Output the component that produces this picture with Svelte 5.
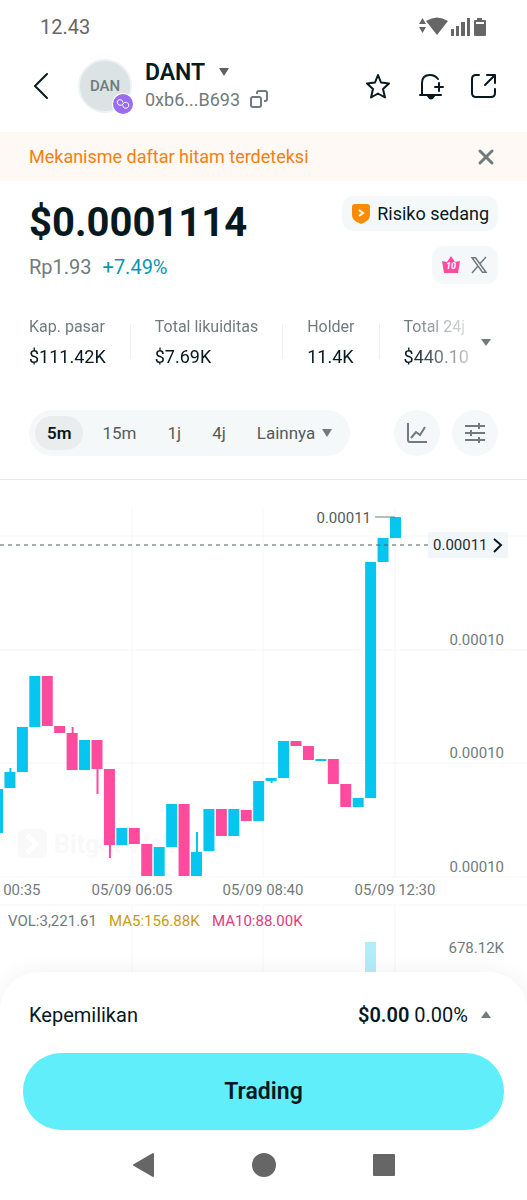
<script lang="ts">
	type Candle = { top: number; bottom: number; high?: number; low?: number; down?: boolean };

	const stats = [
		{ label: 'Kap. pasar', value: '$111.42K' },
		{ label: 'Total likuiditas', value: '$7.69K' },
		{ label: 'Holder', value: '11.4K' },
		{ label: 'Total 24j', value: '$440.10' }
	];

	const frames = ['5m', '15m', '1j', '4j'];
	let activeFrame = '5m';
	let showWarning = true;

	// y values in chart units, oldest first
	const candles: Candle[] = [
		{ top: 309, bottom: 353 },
		{ top: 292, bottom: 308, high: 288 },
		{ top: 247, bottom: 292 },
		{ top: 196, bottom: 247 },
		{ top: 196, bottom: 246, down: true },
		{ top: 246, bottom: 253, down: true },
		{ top: 253, bottom: 290, high: 247, down: true },
		{ top: 260, bottom: 290 },
		{ top: 260, bottom: 289, low: 314, down: true },
		{ top: 289, bottom: 365, low: 378, down: true },
		{ top: 348, bottom: 365 },
		{ top: 348, bottom: 364, down: true },
		{ top: 364, bottom: 396, down: true },
		{ top: 367, bottom: 396 },
		{ top: 324, bottom: 367 },
		{ top: 324, bottom: 396, down: true },
		{ top: 372, bottom: 396, high: 352 },
		{ top: 329, bottom: 371 },
		{ top: 329, bottom: 356, down: true },
		{ top: 329, bottom: 356 },
		{ top: 330, bottom: 341, down: true },
		{ top: 301, bottom: 341 },
		{ top: 298, bottom: 301, low: 303 },
		{ top: 261, bottom: 298 },
		{ top: 261, bottom: 266, down: true },
		{ top: 266, bottom: 280, down: true },
		{ top: 279, bottom: 281 },
		{ top: 279, bottom: 304, down: true },
		{ top: 304, bottom: 327, down: true },
		{ top: 318, bottom: 327 },
		{ top: 82, bottom: 318 },
		{ top: 58, bottom: 82 },
		{ top: 37, bottom: 58 }
	];

	const step = 398 / 32;
	const candleX = (i: number) => i * step - 8;

	const gridX = [132, 263, 395];
	const gridY = [56, 170, 283, 397, 425];
	const priceLabels = [165, 278, 392];
	const times = [
		{ x: 0, text: '05/09 00:35' },
		{ x: 132, text: '05/09 06:05' },
		{ x: 263, text: '05/09 08:40' },
		{ x: 395, text: '05/09 12:30' }
	];
</script>

<main>
	<div class="status">
		<span>12.43</span>
		<svg width="68" height="20" viewBox="0 0 68 20" fill="#666" aria-hidden="true">
			<path d="M3.5 1 7 7H0zM3.5 16 0 10H7z" />
			<path d="M7 4Q18-3 29 4L18 18z" />
			<path d="M32 12h3v7h-3zM37 9h3v10h-3zM42 5h4v14h-4zM48 1h3v18h-3z" />
			<path d="M58 1h5v2h3q1 0 1 1v14q0 1-1 1h-10q-1 0-1-1V4q0-1 1-1h2zM57 5v2h8V5z" fill-rule="evenodd" />
		</svg>
	</div>

	<header>
		<button class="icon" type="button" aria-label="Kembali">
			<svg width="24" height="28" viewBox="0 0 24 28" class="line">
				<path d="M18 2 6 14l12 12" />
			</svg>
		</button>
		<div class="avatar">
			DAN
			<svg class="chain" width="22" height="22" viewBox="0 0 22 22" aria-hidden="true">
				<circle cx="11" cy="11" r="11" fill="#fff" />
				<circle cx="11" cy="11" r="10" fill="#9b6cf0" />
				<path
					d="M11 9.500 10 7.300 7.800 6.500 5.700 7.600 5.200 10l1.600 2 2.400.3L11 11l1.300-1.400 2.300-.3 2 1.500.2 2.400-1.600 1.800-2.400.2-1.800-1.400v-1.500"
					fill="none"
					stroke="#fff"
					stroke-linejoin="round"
				/>
			</svg>
		</div>
		<div class="token">
			<button class="name" type="button">
				DANT
				<svg width="10" height="8" viewBox="0 0 10 8" fill="#5b6264" aria-hidden="true"><path d="M0 0h10L5 8z" /></svg>
			</button>
			<button class="address" type="button">
				0xb6...B693
				<svg width="20" height="20" viewBox="0 0 20 20" fill="none" stroke="#717b7d" stroke-width="2" aria-hidden="true">
					<rect x="2" y="8" width="10" height="10" rx="2" />
					<path d="M8 5V4q0-2 2-2h6q2 0 2 2v6q0 2-2 2h-1" />
				</svg>
			</button>
		</div>
		<div class="actions">
			<button class="icon" type="button" aria-label="Favorit">
				<svg width="28" height="28" viewBox="0 0 28 28" class="line">
					<path d="m14 3 3 7.500 8 1-6 5.500 2 8.500-7-4-7 4 2-8.500-6-5.500 8-1z" />
				</svg>
			</button>
			<button class="icon" type="button" aria-label="Peringatan harga">
				<svg width="28" height="28" viewBox="0 0 28 28" class="line">
					<path d="M5 23V11q0-8 8-8 5 0 8 4M3 23h21M18 15h8M22 11v8" />
					<path d="M11 24q3 5 6 0z" fill="#06191f" />
				</svg>
			</button>
			<button class="icon" type="button" aria-label="Bagikan">
				<svg width="28" height="28" viewBox="0 0 28 28" class="line">
					<path d="M9 3H6Q2 3 2 7v14q0 4 4 4h15q4 0 4-4v-4M15 13 25 3M17 3h8v8" />
				</svg>
			</button>
		</div>
	</header>

	{#if showWarning}
		<div class="warning">
			<span>Mekanisme daftar hitam terdeteksi</span>
			<button class="icon" type="button" aria-label="Tutup" on:click={() => (showWarning = false)}>
				<svg width="24" height="24" viewBox="0 0 24 24" fill="none" stroke="#717b7d" stroke-width="3" stroke-linecap="round">
					<path d="m6 6 12 12M18 6 6 18" />
				</svg>
			</button>
		</div>
	{/if}

	<section class="summary">
		<div>
			<h1>$0.0001114</h1>
			<p><span>Rp1.93</span> <span class="gain">+7.49%</span></p>
		</div>
		<div class="badges">
			<button class="badge risk" type="button">
				<svg width="20" height="20" viewBox="0 0 20 20" aria-hidden="true">
					<path d="M1 3q0-3 3-3h12q3 0 3 3v8q0 6-9 9-9-3-9-9z" fill="#fb8b05" />
					<path d="m8 6 4 3-4 3" fill="none" stroke="#fff" stroke-width="2" />
				</svg>
				Risiko sedang
			</button>
			<div class="badge links">
				<svg width="18" height="18" viewBox="0 0 18 18" aria-hidden="true">
					<path d="m0 5 5 1 4-6 4 6 5-1-2 12H2z" fill="#ff4b9e" />
					<text x="9" y="13" text-anchor="middle" class="rank">10</text>
				</svg>
				<svg width="18" height="18" viewBox="0 0 18 18" fill="none" stroke="#717b7d" aria-hidden="true">
					<path d="M2 1.700h3.500l10.500 14.600h-3.500z" stroke-width="1.500" />
					<path d="m16 1-6.300 7M8 10l-6 7" stroke-width="1.500" />
				</svg>
			</div>
		</div>
	</section>

	<section class="stats">
		<dl>
			{#each stats as stat}
				<div>
					<dt>{stat.label}</dt>
					<dd>{stat.value}</dd>
				</div>
			{/each}
		</dl>
		<button class="icon" type="button" aria-label="Lihat semua">
			<svg width="10" height="7" viewBox="0 0 10 7" fill="#717b7d"><path d="M0 0h10L5 7z" /></svg>
		</button>
	</section>

	<section class="tools">
		<div class="frames">
			{#each frames as frame}
				<button type="button" class:active={frame === activeFrame} on:click={() => (activeFrame = frame)}>{frame}</button>
			{/each}
			<button type="button">
				Lainnya
				<svg width="10" height="8" viewBox="0 0 10 8" fill="#717b7d" aria-hidden="true"><path d="M0 0h10L5 8z" /></svg>
			</button>
		</div>
		<button class="round" type="button" aria-label="Indikator">
			<svg width="24" height="24" viewBox="0 0 24 24" fill="none" stroke="#717b7d" stroke-width="2">
				<path d="M3 2v17q0 2 2 2h17M6 17l5-6 4 3 5-8" />
			</svg>
		</button>
		<button class="round" type="button" aria-label="Pengaturan grafik">
			<svg width="24" height="24" viewBox="0 0 24 24" fill="none" stroke="#717b7d" stroke-width="2">
				<path d="M2 5h20M2 12h20M2 19h20M16 2v6M8 9v6M16 16v6" />
			</svg>
		</button>
	</section>

	<svg class="chart" viewBox="0 0 527 560" role="img" aria-label="Grafik harga DANT">
		<g class="grid">
			{#each gridX as x}
				<path d="M{x} 28V397M{x} 425V560" />
			{/each}
			{#each gridY as y}
				<path d="M0 {y}H527" />
			{/each}
		</g>

		<g class="watermark">
			<rect x="18" y="349" width="29" height="29" rx="6" />
			<path d="m27 355 9 9-9 9" />
			<text x="54" y="373">Bitget Wallet</text>
		</g>

		{#each candles as candle, i}
			<g class:down={candle.down} class="candle">
				<rect x={candleX(i)} y={candle.top} width="11" height={candle.bottom - candle.top} />
				{#if candle.high}
					<rect x={candleX(i) + 5} y={candle.high} width="2" height={candle.top - candle.high} />
				{/if}
				{#if candle.low}
					<rect x={candleX(i) + 5} y={candle.bottom} width="2" height={candle.low - candle.bottom} />
				{/if}
			</g>
		{/each}

		<path class="last-price" d="M0 65H428" />
		<rect x="428" y="52" width="80" height="26" rx="2" fill="#f1f6fa" />
		<text class="dark" x="433" y="70">0.00011</text>
		<path class="chevron" d="m494 59 7 6-7 7" />

		<text class="high" x="371" y="43" text-anchor="end">0.00011</text>
		<path d="M375 37H395" stroke="#717b7d" />

		{#each priceLabels as y}
			<text x="504" {y} text-anchor="end">0.00010</text>
		{/each}
		{#each times as time}
			<text x={time.x} y="415" text-anchor="middle">{time.text}</text>
		{/each}

		<text x="8" y="446">VOL:3,221.61</text>
		<text x="109" y="446" class="ma5">MA5:156.88K</text>
		<text x="212" y="446" class="ma10">MA10:88.00K</text>
		<text x="504" y="473" text-anchor="end">678.12K</text>
		<rect x="365" y="462" width="11" height="98" fill="#b3edf9" />
	</svg>

	<footer>
		<button class="holdings" type="button">
			<span>Kepemilikan</span>
			<span class="amount"><b>$0.00</b> 0.00%</span>
			<svg width="10" height="7" viewBox="0 0 10 7" fill="#717b7d" aria-hidden="true"><path d="M0 7h10L5 0z" /></svg>
		</button>
		<button class="trade" type="button">Trading</button>
		<nav>
			<button class="icon" type="button" aria-label="Back">
				<svg width="24" height="26" viewBox="0 0 24 26"><path d="M2 13 21 2v22z" /></svg>
			</button>
			<button class="icon" type="button" aria-label="Home">
				<svg width="24" height="26" viewBox="0 0 24 26"><circle cx="12" cy="13" r="12" /></svg>
			</button>
			<button class="icon" type="button" aria-label="Recent apps">
				<svg width="24" height="26" viewBox="0 0 24 26"><rect x="2" y="3" width="20" height="20" /></svg>
			</button>
		</nav>
	</footer>
</main>

<style>
	:global(body) {
		background-color: #fff;
	}

	main {
		font-family: Roboto, sans-serif;
		font-size: 18px;
		color: #06191f;
		background-color: #fff;
		overflow: hidden;
	}

	button {
		margin: 0;
		padding: 0;
		border: none;
		background: none;
		font: inherit;
		color: inherit;
		cursor: pointer;
	}

	svg {
		display: block;
		flex-shrink: 0;
	}

	.icon {
		display: flex;
		align-items: center;
		justify-content: center;
		min-width: 24px;
	}

	.line {
		fill: none;
		stroke: #06191f;
		stroke-width: 2;
		stroke-linecap: round;
		stroke-linejoin: round;
	}

	.status {
		display: flex;
		align-items: center;
		justify-content: space-between;
		height: 53px;
		padding: 0 40px;
		font-size: 20px;
		color: #666;
	}

	header {
		display: flex;
		align-items: center;
		height: 65px;
		padding: 0 29px;
		margin-bottom: 14px;
	}

	.avatar {
		position: relative;
		display: flex;
		align-items: center;
		justify-content: center;
		width: 50px;
		height: 50px;
		margin: 0 13px 0 25px;
		border: 2px solid #edf2f2;
		border-radius: 50%;
		background-color: #dbe3e4;
		color: #717b7d;
		font-size: 15px;
		font-weight: 500;
	}

	.chain {
		position: absolute;
		right: -4px;
		bottom: -4px;
	}

	.token {
		flex: 1;
	}

	.name,
	.address {
		display: flex;
		align-items: center;
		height: 27px;
	}

	.name {
		gap: 14px;
		font-size: 23px;
		font-weight: 600;
	}

	.address {
		gap: 9px;
		color: #717b7d;
	}

	.actions {
		display: flex;
		gap: 25px;
	}

	.warning {
		display: flex;
		align-items: center;
		justify-content: space-between;
		height: 49px;
		padding: 0 29px;
		background-color: #fff9f5;
		color: #f5800f;
	}

	.summary {
		display: flex;
		justify-content: space-between;
		padding: 15px 29px 0;
	}

	h1 {
		margin: 0;
		font-size: 40px;
		font-weight: 700;
		line-height: 54px;
	}

	p {
		margin: 0;
		font-size: 20px;
		line-height: 34px;
		color: #717b7d;
	}

	.gain {
		margin-left: 6px;
		color: #0b96b0;
	}

	.badges {
		display: flex;
		flex-direction: column;
		align-items: flex-end;
		justify-content: space-between;
	}

	.badge {
		display: flex;
		align-items: center;
		border-radius: 12px;
		background-color: #f5f8f9;
	}

	.risk {
		height: 35px;
		gap: 6px;
		padding: 0 9px;
	}

	.links {
		height: 38px;
		gap: 10px;
		padding: 0 10px;
	}

	.rank {
		font-size: 9px;
		font-weight: 700;
		font-style: italic;
		fill: #fff;
	}

	.stats {
		display: flex;
		align-items: center;
		gap: 4px;
		padding: 32px 29px 0;
	}

	dl {
		display: flex;
		flex: 1;
		min-width: 0;
		margin: 0;
		overflow: hidden;
		white-space: nowrap;
		mask-image: linear-gradient(to left, rgba(0, 0, 0, 0.2), #000 60px);
	}

	dl div {
		position: relative;
		padding-right: 49px;
	}

	dl div::after {
		content: '';
		position: absolute;
		top: 8px;
		right: 24px;
		width: 1px;
		height: 35px;
		background-color: #eceff0;
	}

	dl div:last-child {
		padding-right: 0;
	}

	dl div:last-child::after {
		display: none;
	}

	dt {
		font-size: 16px;
		line-height: 22px;
		color: #717b7d;
	}

	dd {
		margin: 8px 0 0;
		line-height: 22px;
	}

	.tools {
		display: flex;
		gap: 12px;
		padding: 42px 29px 23px;
		border-bottom: 1px solid #e6e9ea;
	}

	.frames {
		display: flex;
		gap: 7px;
		padding: 6px;
		margin-right: auto;
		border-radius: 23px;
		background-color: #f5f8f9;
	}

	.frames button {
		display: flex;
		align-items: center;
		gap: 7px;
		height: 34px;
		padding: 0 12px;
		border-radius: 17px;
		font-size: 17px;
		color: #535c5e;
	}

	.frames .active {
		background-color: #e9edee;
		color: #06191f;
		font-weight: 600;
	}

	.round {
		display: flex;
		align-items: center;
		justify-content: center;
		width: 46px;
		height: 46px;
		border-radius: 50%;
		background-color: #f5f8f9;
	}

	.chart {
		width: 100%;
		height: auto;
		font-size: 15px;
		fill: #717b7d;
	}

	.grid {
		stroke: #f5f6f6;
	}

	.watermark {
		fill: #f9f9f9;
		font-size: 25px;
		font-weight: 700;
	}

	.watermark path {
		fill: none;
		stroke: #fff;
		stroke-width: 5;
	}

	.candle {
		fill: #06c5ee;
	}

	.candle.down {
		fill: #ff4b9e;
	}

	.last-price {
		stroke: #535c5e;
		stroke-dasharray: 4 4;
	}

	.chevron {
		fill: none;
		stroke: #06191f;
		stroke-width: 2;
	}

	.dark {
		fill: #1d2d33;
	}

	.high {
		fill: #535c5e;
	}

	.ma5 {
		fill: #c99a16;
	}

	.ma10 {
		fill: #e23a80;
	}

	footer {
		position: relative;
		margin-top: -68px;
		border-radius: 38px 38px 0 0;
		background-color: #fff;
		box-shadow: 0 0 24px rgba(0, 20, 26, 0.06);
	}

	.holdings {
		display: flex;
		align-items: center;
		width: 100%;
		height: 81px;
		padding: 4px 36px 0 29px;
		font-size: 20px;
	}

	.amount {
		margin: 0 13px 0 auto;
	}

	b {
		font-weight: 600;
	}

	.trade {
		display: block;
		width: calc(100% - 46px);
		height: 77px;
		margin: 0 23px;
		border-radius: 38px;
		background-color: #60effa;
		font-size: 23px;
		font-weight: 600;
	}

	nav {
		display: flex;
		justify-content: center;
		gap: 96px;
		padding: 22px 0;
		fill: #666;
	}

	nav path,
	nav rect {
		stroke: #666;
		stroke-width: 2;
		stroke-linejoin: round;
	}
</style>
